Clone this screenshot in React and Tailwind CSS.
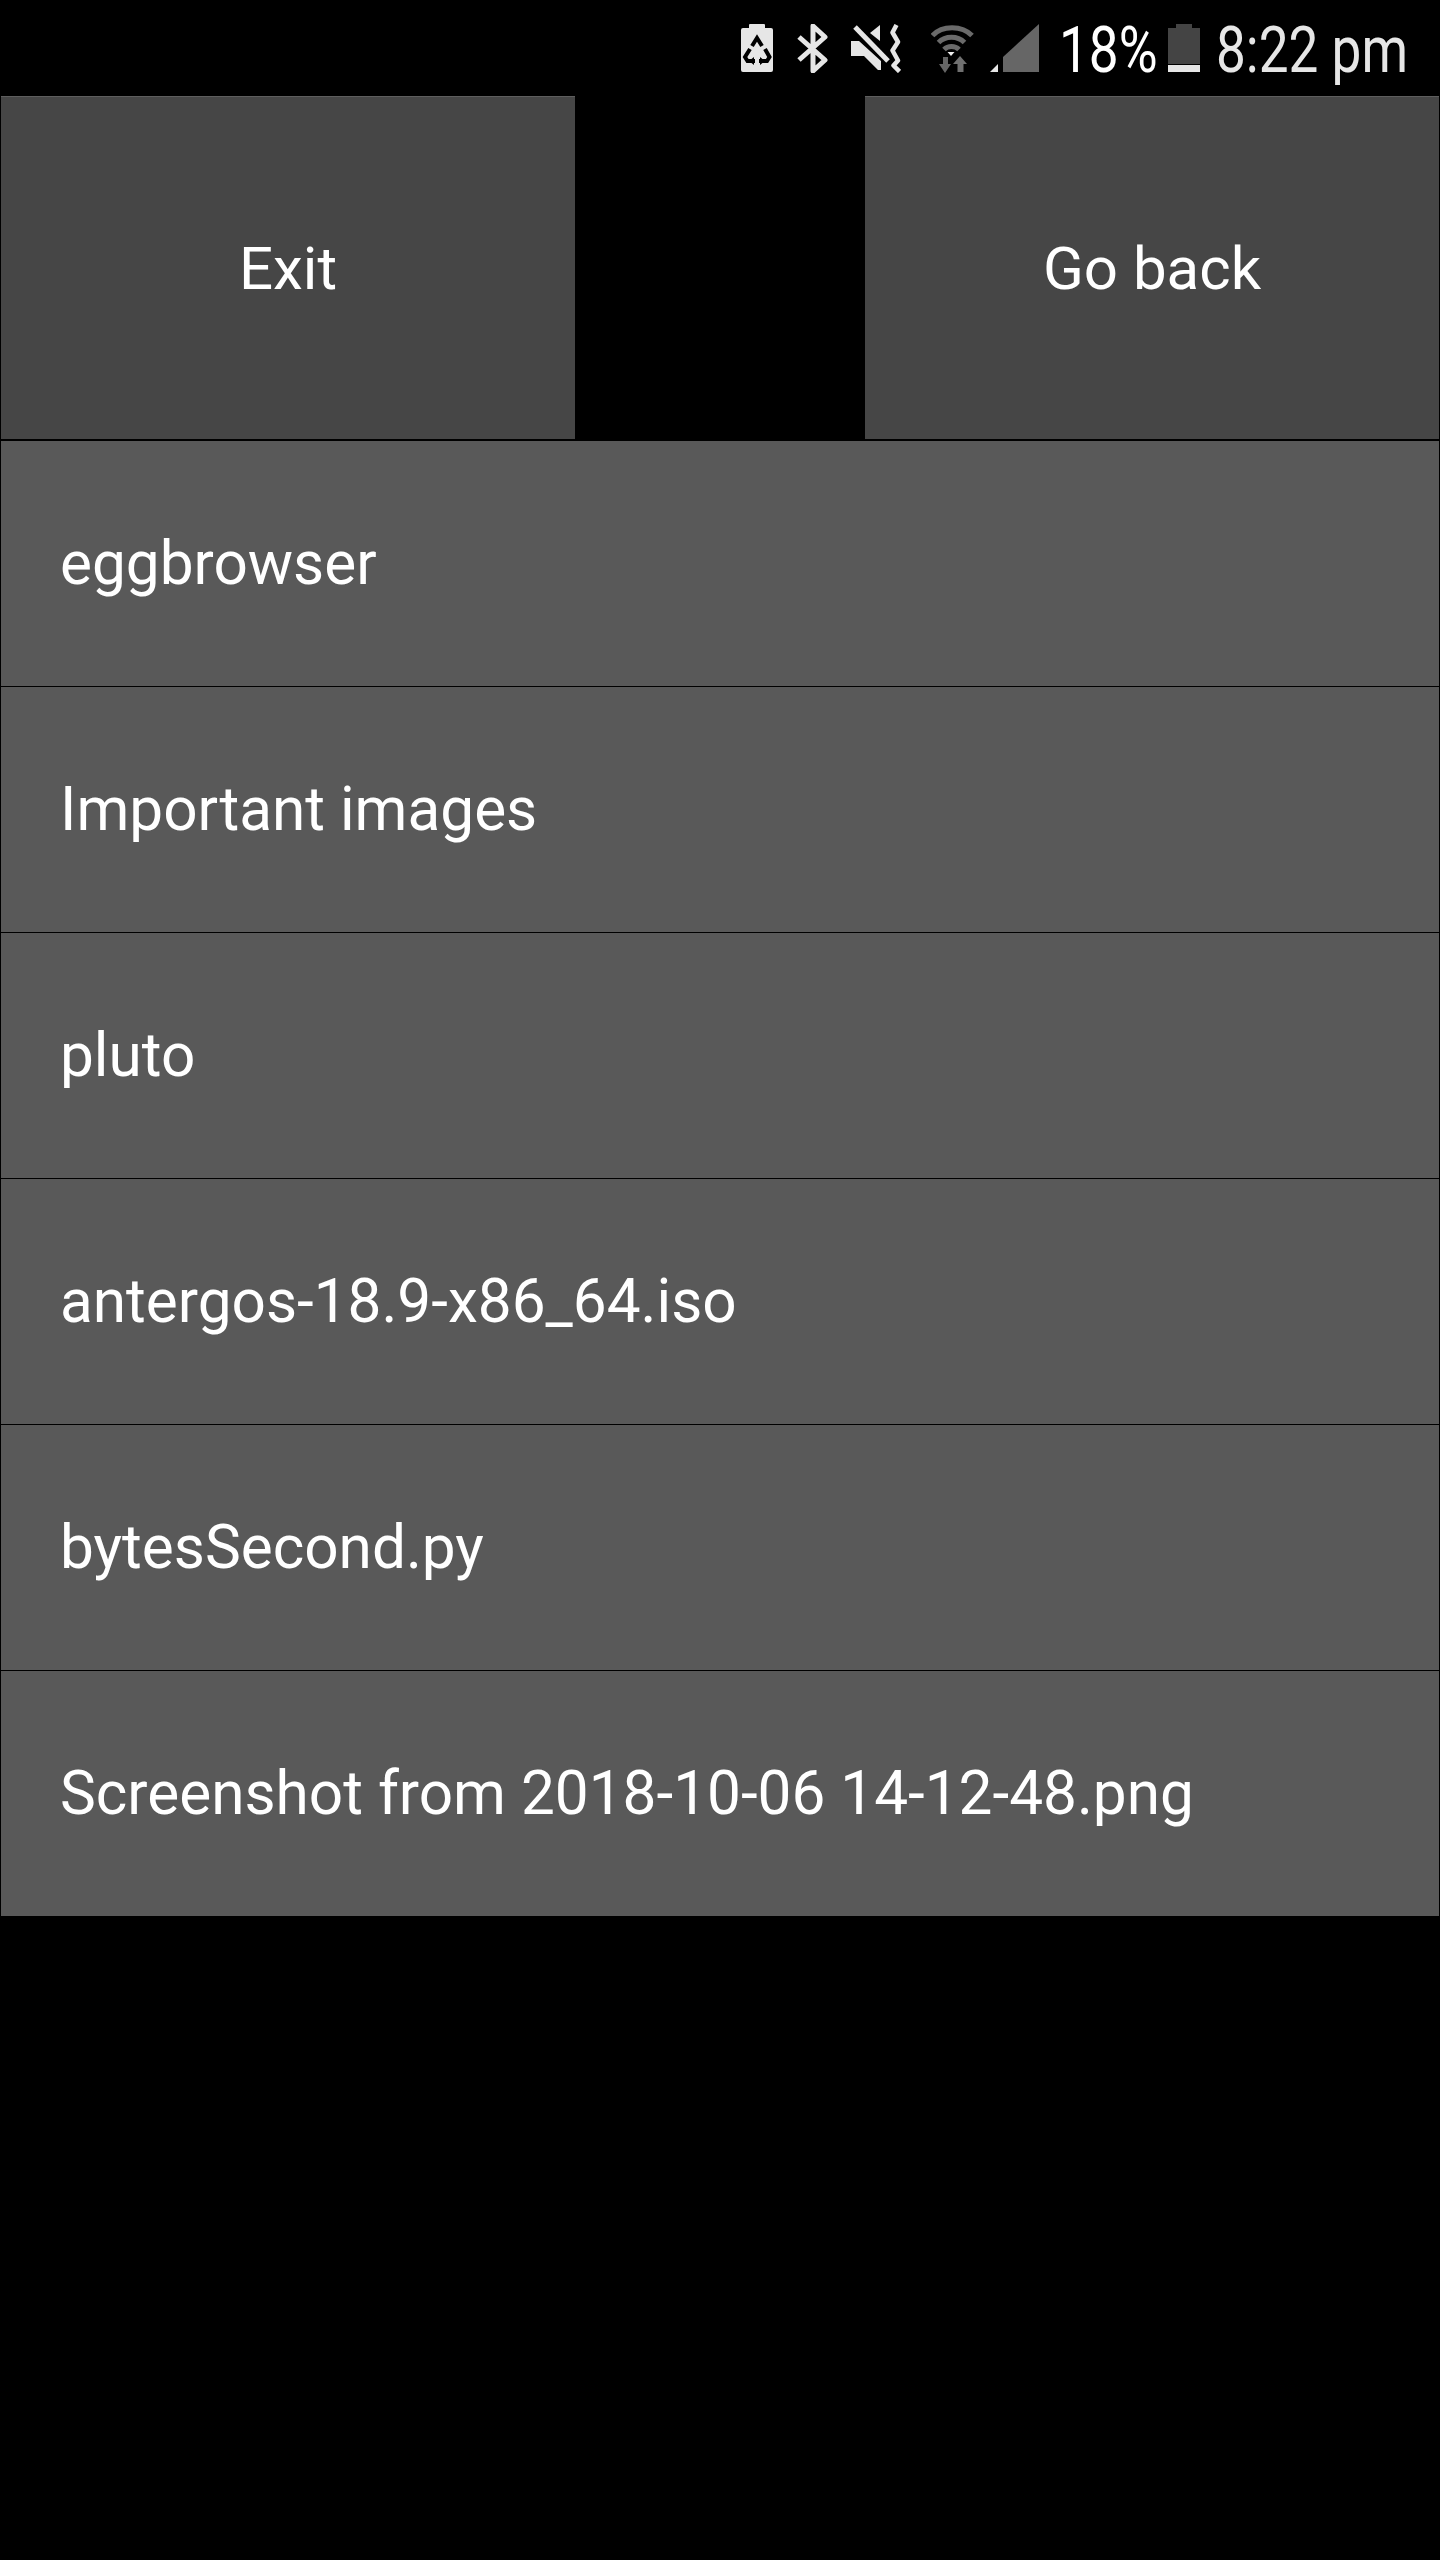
const rows = ["eggbrowser","Important images","pluto","antergos-18.9-x86_64.iso","bytesSecond.py","Screenshot from 2018-10-06 14-12-48.png"];

function BatteryRecycle() {
  return (
    <svg width="32" height="48" viewBox="0 0 32 48">
      <path d="M9 0h14a1 1 0 0 1 1 1v3h6a2 2 0 0 1 2 2v40a2 2 0 0 1-2 2H2a2 2 0 0 1-2-2V6a2 2 0 0 1 2-2h6V1a1 1 0 0 1 1-1z" fill="#e6e6e6" />
      <g fill="none" stroke="#000" strokeWidth="4">
        <path d="M11 22l5-8 5 8" />
        <path d="M9 25l-5 8 2.500 4H14" />
        <path d="M24 25l4.500 8-2.500 4h-8" />
      </g>
      <path d="M13 33v8l-5-4zM19 33v8l5-4z" fill="#000" />
    </svg>
  );
}
function Bluetooth() {
  return (
    <svg width="31" height="49" viewBox="0 0 31 49" className="ml-[24px]">
      <path d="M2 13l26 23-12 11V2l12 11L2 36" fill="none" stroke="#e6e6e6" strokeWidth="5" strokeLinejoin="round" />
    </svg>
  );
}
function MuteVibrate() {
  return (
    <svg width="50" height="49" viewBox="0 0 50 49" className="ml-[23px]">
      <path d="M0 17h8l22 20v9h-3L13 32H0z" fill="#e6e6e6" />
      <path d="M29 1v16L19 9z" fill="#e6e6e6" />
      <path d="M4 3l33 34" stroke="#e6e6e6" strokeWidth="5" />
      <path d="M45.500 1l-4 7.500 5.500 9.500-5.500 8.500 5.500 10-4.500 5 6 6" fill="none" stroke="#e6e6e6" strokeWidth="4.500" strokeLinejoin="round" />
    </svg>
  );
}
function Wifi() {
  return (
    <svg width="43" height="49" viewBox="0 0 43 49" className="ml-[30px]">
      <g fill="none" stroke="#6a6a6a" strokeWidth="5">
        <path d="M1.500 11.500C11 1 31 1 41 11.500" />
        <path d="M7.500 18.500c7-7 19-7 26 0" />
        <path d="M13 25.500c4-4 11-4 15 0" />
      </g>
      <path d="M16.500 28h7l-3.500 4z" fill="#ededed" />
      <path d="M8 40h4v-7h5v7h3l-6 9z" fill="#666" />
      <path d="M29 32l7 8h-3.500v8h-6v-8H22z" fill="#707070" />
    </svg>
  );
}
function Signal() {
  return (
    <svg width="49" height="49" viewBox="0 0 49 49" className="ml-[16px]">
      <path d="M0 48l8-8v8z" fill="#e6e6e6" />
      <path d="M13 48V33L49 0v48z" fill="#666" />
    </svg>
  );
}
function Battery() {
  return (
    <svg width="32" height="48" viewBox="0 0 32 48" className="ml-[15px]">
      <path d="M8 0h16v4h8v36H0V4h8z" fill="#444" />
      <path d="M0 41h32v7H0z" fill="#e6e6e6" />
    </svg>
  );
}

export default function App() {
  const font = "font-['Roboto','Noto_Sans',sans-serif]";
  return (
    <div className={`w-[1440px] h-[2560px] bg-black text-white ${font} overflow-hidden`}>
      <div className="h-[96px] flex items-start pt-[24px] pl-[741px]">
        <BatteryRecycle /><Bluetooth /><MuteVibrate /><Wifi /><Signal />
        <span className="ml-[20px] w-[94px] mt-[3px] text-[64px] leading-[48px] text-[#fff] origin-left scale-x-[.83] whitespace-nowrap">18%</span>
        <Battery />
        <span className="ml-[16px] w-[190px] mt-[3px] text-[64px] leading-[48px] text-[#e6e6e6] origin-left scale-x-[.83] whitespace-nowrap">8:22 pm</span>
      </div>
      <div className="h-[343px] flex justify-between px-px">
        <div className="w-[574px] h-full bg-[#464646] border-t border-[#5e5e5e] flex items-center justify-center pt-[2px] text-[60px]">Exit</div>
        <div className="w-[574px] h-full bg-[#464646] border-t border-[#5e5e5e] flex items-center justify-center pt-[2px] text-[60px]">Go back</div>
      </div>
      <div className="mt-[2px] flex flex-col gap-px px-px">
        {rows.map((r) => (
          <div key={r} className="h-[245px] bg-[#595959] flex items-center pl-[59px] pt-[2px] text-[60.3px] whitespace-nowrap">{r}</div>
        ))}
      </div>
    </div>
  );
}
